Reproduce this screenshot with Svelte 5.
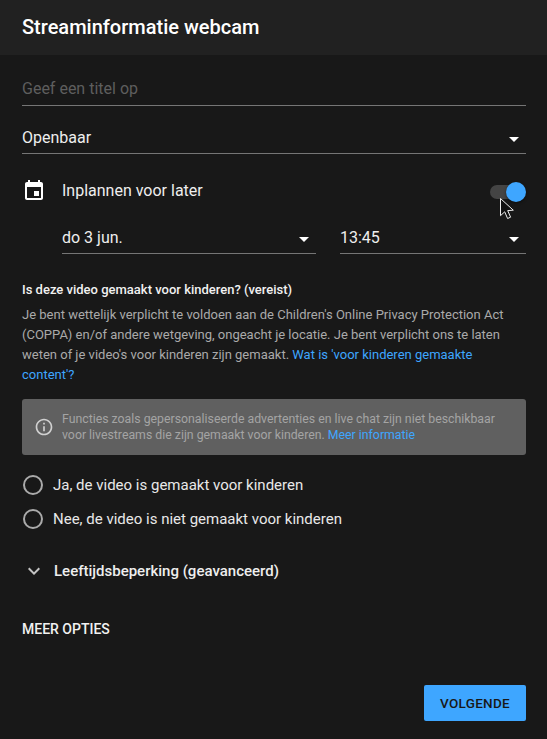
<script>
  const radios = [
    "Ja, de video is gemaakt voor kinderen",
    "Nee, de video is niet gemaakt voor kinderen",
  ];
</script>

<div class="dialog">
  <header class="head">Streaminformatie webcam</header>

  <div class="body">
    <div class="field title-field">
      <span class="placeholder">Geef een titel op</span>
    </div>

    <div class="field select-field">
      <span>Openbaar</span>
      <span class="caret"></span>
    </div>

    <div class="schedule">
      <svg class="calendar" viewBox="0 0 24 24" width="24" height="24" aria-hidden="true">
        <path
          fill="#fff"
          d="M17 12h-5v5h5v-5zM16 1v2H8V1H6v2H5c-1.11 0-1.99.9-1.99 2L3 19c0 1.1.89 2 2 2h14c1.1 0 2-.9 2-2V5c0-1.1-.9-2-2-2h-1V1h-2zm3 18H5V8h14v11z"
        />
      </svg>
      <span class="schedule-label">Inplannen voor later</span>
      <div class="switch">
        <span class="track"></span>
        <span class="thumb"></span>
        <svg class="cursor" viewBox="0 0 16 24" width="16" height="24" aria-hidden="true">
          <path
            d="M1.5 1.5v17.2l4.2-3.9 2.9 6.7 3-1.3-2.9-6.6 5.6-.4z"
            fill="#111"
            stroke="#eee"
            stroke-width="1"
          />
        </svg>
      </div>
    </div>

    <div class="when">
      <div class="field date-field">
        <span>do 3 jun.</span>
        <span class="caret"></span>
      </div>
      <div class="field time-field">
        <span>13:45</span>
        <span class="caret"></span>
      </div>
    </div>

    <h2 class="kids-title">Is deze video gemaakt voor kinderen? (vereist)</h2>
    <p class="kids-text">
      Je bent wettelijk verplicht te voldoen aan de Children's Online Privacy Protection Act
      (COPPA) en/of andere wetgeving, ongeacht je locatie. Je bent verplicht ons te laten
      weten of je video's voor kinderen zijn gemaakt.
      <a href="#kids">Wat is 'voor kinderen gemaakte content'?</a>
    </p>

    <div class="notice">
      <svg class="info" viewBox="0 0 24 24" width="20" height="20" aria-hidden="true">
        <path
          fill="#d0d0d0"
          d="M11 7h2v2h-2zm0 4h2v6h-2zm1-9C6.48 2 2 6.48 2 12s4.48 10 10 10 10-4.48 10-10S17.52 2 12 2zm0 18c-4.41 0-8-3.59-8-8s3.59-8 8-8 8 3.59 8 8-3.59 8-8 8z"
        />
      </svg>
      <p>
        Functies zoals gepersonaliseerde advertenties en live chat zijn niet beschikbaar
        voor livestreams die zijn gemaakt voor kinderen. <a href="#info">Meer informatie</a>
      </p>
    </div>

    <div class="radios">
      {#each radios as label}
        <div class="radio">
          <span class="circle"></span>
          <span>{label}</span>
        </div>
      {/each}
    </div>

    <div class="age">
      <svg viewBox="0 0 24 24" width="24" height="24" aria-hidden="true">
        <path fill="#c4c4c4" d="M7.41 8.59 12 13.17l4.59-4.58L18 10l-6 6-6-6z" />
      </svg>
      <span>Leeftijdsbeperking (geavanceerd)</span>
    </div>

    <div class="more">MEER OPTIES</div>

    <div class="footer">
      <button class="next">VOLGENDE</button>
    </div>
  </div>
</div>

<style>
  :global(body) {
    background: #181818;
  }

  .dialog {
    width: 547px;
    height: 739px;
    overflow: hidden;
    background: #181818;
    color: #fff;
    font-family: Roboto, "Liberation Sans", sans-serif;
  }

  .head {
    height: 55px;
    box-sizing: border-box;
    padding: 15px 22px 0;
    background: #212121;
    font-size: 20px;
    font-weight: 500;
    line-height: 24px;
  }

  .body {
    padding: 0 21px 0 22px;
  }

  .field {
    display: flex;
    align-items: center;
    justify-content: space-between;
    box-sizing: border-box;
    border-bottom: 1px solid #757575;
    font-size: 16px;
    color: #eee;
  }

  .title-field {
    height: 51px;
    padding-top: 16px;
  }

  .placeholder {
    color: #5e5e5e;
  }

  .select-field {
    height: 48px;
    padding-top: 15px;
  }

  .caret {
    width: 0;
    height: 0;
    margin-top: 4px;
    margin-right: 7px;
    border-left: 5px solid transparent;
    border-right: 5px solid transparent;
    border-top: 5px solid #fff;
  }

  .schedule {
    display: flex;
    align-items: center;
    height: 24px;
    margin-top: 25px;
  }

  .calendar {
    flex: none;
  }

  .schedule-label {
    margin-left: 16px;
    margin-bottom: 1px;
    font-size: 16px;
    color: #eee;
  }

  .switch {
    position: relative;
    width: 36px;
    height: 20px;
    margin-left: auto;
  }

  .track {
    position: absolute;
    left: 0;
    top: 4px;
    width: 34px;
    height: 14px;
    border-radius: 7px;
    background: #444;
  }

  .thumb {
    position: absolute;
    right: 0;
    top: 1px;
    width: 20px;
    height: 20px;
    border-radius: 50%;
    background: #3ea6ff;
    box-shadow: 0 1px 3px rgba(0, 0, 0, 0.5);
  }

  .cursor {
    position: absolute;
    left: 9px;
    top: 16px;
  }

  .when {
    display: flex;
    gap: 24px;
    margin-top: 13px;
    padding-left: 40px;
  }

  .when .field {
    height: 38px;
    padding-top: 5px;
  }

  .date-field {
    width: 254px;
  }

  .time-field {
    width: 186px;
  }

  .kids-title {
    margin: 27px 0 0;
    font-size: 13px;
    font-weight: 500;
    line-height: 18px;
    color: #f1f1f1;
  }

  .kids-text {
    width: 485px;
    margin: 6px 0 0;
    font-size: 13px;
    line-height: 20px;
    color: #aaa;
  }

  a {
    color: #3ea6ff;
    text-decoration: none;
  }

  .notice {
    display: flex;
    align-items: center;
    height: 56px;
    margin-top: 14px;
    padding-left: 12px;
    box-sizing: border-box;
    border-radius: 3px;
    background: #606060;
  }

  .info {
    flex: none;
  }

  .notice p {
    width: 445px;
    margin: 0 0 0 8px;
    font-size: 12.3px;
    line-height: 16px;
    color: #a4a4a4;
  }

  .radios {
    display: flex;
    flex-direction: column;
    gap: 14px;
    margin-top: 20px;
  }

  .radio {
    display: flex;
    align-items: center;
    gap: 10px;
    height: 20px;
    margin-left: 1px;
    font-size: 15px;
    color: #e8e8e8;
  }

  .circle {
    box-sizing: border-box;
    width: 20px;
    height: 20px;
    border: 2px solid #aaa;
    border-radius: 50%;
  }

  .age {
    display: flex;
    align-items: center;
    gap: 8px;
    height: 24px;
    margin-top: 30px;
    font-size: 15px;
    font-weight: 500;
    color: #eee;
  }

  .more {
    margin-top: 37px;
    font-size: 14px;
    font-weight: 500;
    line-height: 18px;
    color: #f1f1f1;
  }

  .footer {
    display: flex;
    justify-content: flex-end;
    margin-top: 47px;
  }

  .next {
    width: 102px;
    height: 36px;
    border: none;
    border-radius: 2px;
    background: #3ea6ff;
    color: #181818;
    font-family: inherit;
    font-size: 13.5px;
    font-weight: 500;
    letter-spacing: 0.3px;
  }
</style>
